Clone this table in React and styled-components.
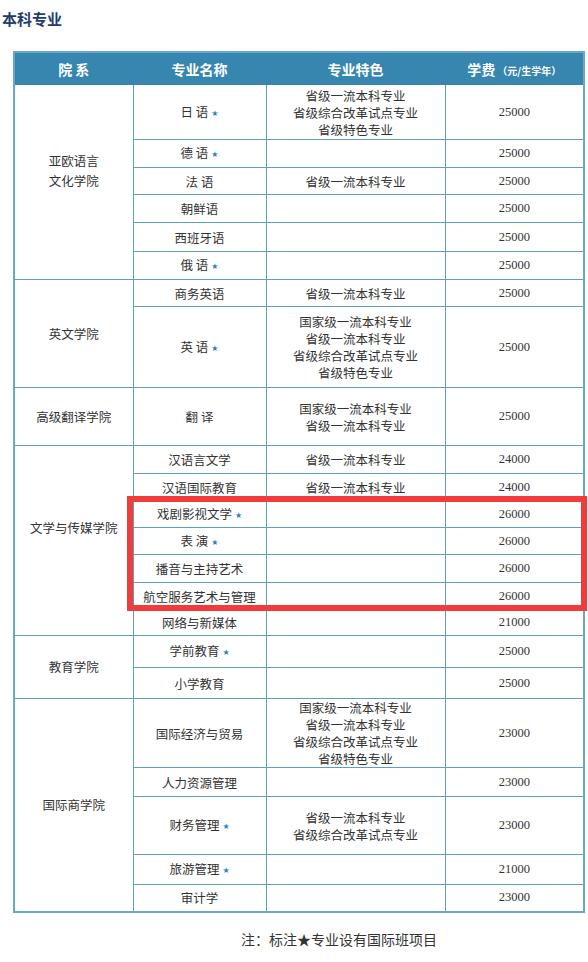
import React from 'react';
import styled, { createGlobalStyle } from 'styled-components';

const GlobalStyle = createGlobalStyle`
  html, body {
    margin: 0;
    padding: 0;
    background: #fff;
  }
  body {
    font-family: "Noto Sans CJK SC", "Noto Sans", sans-serif;
    color: #333;
  }
`;

const Page = styled.div`
  width: 588px;
  padding-top: 9px;
`;

const Title = styled.h2`
  margin: 0 0 22px 2px;
  font-size: 15px;
  line-height: 20px;
  font-weight: bold;
  color: #1f3d6c;
`;

const TableWrap = styled.div`
  position: relative;
  margin-left: 13px;
  width: 570px;
`;

const Table = styled.table`
  width: 570px;
  border-collapse: collapse;
  table-layout: fixed;
  border: 2px solid #6aa7cd;
`;

const HeadCell = styled.th`
  height: 31px;
  padding: 0;
  background: #3786b0;
  border: 1px solid #3786b0;
  color: #fff;
  font-size: 14px;
  font-weight: bold;
  text-align: center;
  vertical-align: middle;
  white-space: nowrap;
`;

const Unit = styled.span`
  font-size: 10px;
  margin-left: 2px;
`;

const Row = styled.tr`
  height: ${p => p.$h}px;
`;

const Cell = styled.td`
  padding: 0;
  border: 1px solid #5d9dc7;
  text-align: center;
  vertical-align: middle;
  font-size: 12.5px;
  line-height: 17px;
  color: #333;
  white-space: nowrap;
`;

const DeptCell = styled(Cell)`
  padding-bottom: ${p => p.$lift || 0}px;
  line-height: 20px;
`;

const FeeCell = styled(Cell)`
  font-family: "Liberation Serif", serif;
  font-size: 12.5px;
`;

const Star = styled.span`
  font-family: "DejaVu Sans", sans-serif;
  font-size: 8px;
  color: #2f82bd;
  margin-left: 3px;
  vertical-align: 1px;
`;

const Line = styled.div``;

const Highlight = styled.div`
  position: absolute;
  left: 114px;
  top: 445px;
  width: 460px;
  height: 115px;
  box-sizing: border-box;
  border: 6px solid #f23b3b;
  pointer-events: none;
`;

const Note = styled.div`
  margin-top: 16px;
  padding-left: 241px;
  font-size: 14px;
  line-height: 20px;
  color: #333;
`;

const groups = [
  {
    dept: ['亚欧语言', '文化学院'],
    lift: 22,
    rows: [
      { name: '日 语', star: true, feat: ['省级一流本科专业', '省级综合改革试点专业', '省级特色专业'], fee: 25000, h: 55 },
      { name: '德 语', star: true, fee: 25000, h: 28 },
      { name: '法 语', feat: ['省级一流本科专业'], fee: 25000, h: 27 },
      { name: '朝鲜语', fee: 25000, h: 28 },
      { name: '西班牙语', fee: 25000, h: 29 },
      { name: '俄 语', star: true, fee: 25000, h: 28 },
    ],
  },
  {
    dept: ['英文学院'],
    rows: [
      { name: '商务英语', feat: ['省级一流本科专业'], fee: 25000, h: 27 },
      { name: '英 语', star: true, feat: ['国家级一流本科专业', '省级一流本科专业', '省级综合改革试点专业', '省级特色专业'], fee: 25000, h: 81 },
    ],
  },
  {
    dept: ['高级翻译学院'],
    rows: [
      { name: '翻 译', feat: ['国家级一流本科专业', '省级一流本科专业'], fee: 25000, h: 58 },
    ],
  },
  {
    dept: ['文学与传媒学院'],
    lift: 26,
    rows: [
      { name: '汉语言文学', feat: ['省级一流本科专业'], fee: 24000, h: 28 },
      { name: '汉语国际教育', feat: ['省级一流本科专业'], fee: 24000, h: 28 },
      { name: '戏剧影视文学', star: true, fee: 26000, h: 26 },
      { name: '表 演', star: true, fee: 26000, h: 27 },
      { name: '播音与主持艺术', fee: 26000, h: 28 },
      { name: '航空服务艺术与管理', fee: 26000, h: 27 },
      { name: '网络与新媒体', fee: 21000, h: 26 },
    ],
  },
  {
    dept: ['教育学院'],
    rows: [
      { name: '学前教育', star: true, fee: 25000, h: 32 },
      { name: '小学教育', fee: 25000, h: 31 },
    ],
  },
  {
    dept: ['国际商学院'],
    rows: [
      { name: '国际经济与贸易', feat: ['国家级一流本科专业', '省级一流本科专业', '省级综合改革试点专业', '省级特色专业'], fee: 23000, h: 64 },
      { name: '人力资源管理', fee: 23000, h: 29 },
      { name: '财务管理', star: true, feat: ['省级一流本科专业', '省级综合改革试点专业'], fee: 23000, h: 58 },
      { name: '旅游管理', star: true, fee: 21000, h: 30 },
      { name: '审计学', fee: 23000, h: 27 },
    ],
  },
];

const App = () => {
  return (
    <Page>
      <GlobalStyle />
      <Title>本科专业</Title>
      <TableWrap>
        <Table>
          <colgroup>
            <col style={{ width: 119 }} />
            <col style={{ width: 133 }} />
            <col style={{ width: 179 }} />
            <col style={{ width: 139 }} />
          </colgroup>
          <thead>
            <tr>
              <HeadCell>院 系</HeadCell>
              <HeadCell>专业名称</HeadCell>
              <HeadCell>专业特色</HeadCell>
              <HeadCell>
                学费<Unit>（元/生学年）</Unit>
              </HeadCell>
            </tr>
          </thead>
          <tbody>
            {groups.map(group =>
              group.rows.map((row, i) => (
                <Row key={group.dept.join('') + row.name} $h={row.h}>
                  {i === 0 && (
                    <DeptCell rowSpan={group.rows.length} $lift={group.lift}>
                      {group.dept.map(d => (
                        <Line key={d}>{d}</Line>
                      ))}
                    </DeptCell>
                  )}
                  <Cell>
                    {row.name}
                    {row.star && <Star>★</Star>}
                  </Cell>
                  <Cell>
                    {(row.feat || []).map(f => (
                      <Line key={f}>{f}</Line>
                    ))}
                  </Cell>
                  <FeeCell>{row.fee}</FeeCell>
                </Row>
              ))
            )}
          </tbody>
        </Table>
        <Highlight />
      </TableWrap>
      <Note>注：标注★专业设有国际班项目</Note>
    </Page>
  );
};

export default App;
